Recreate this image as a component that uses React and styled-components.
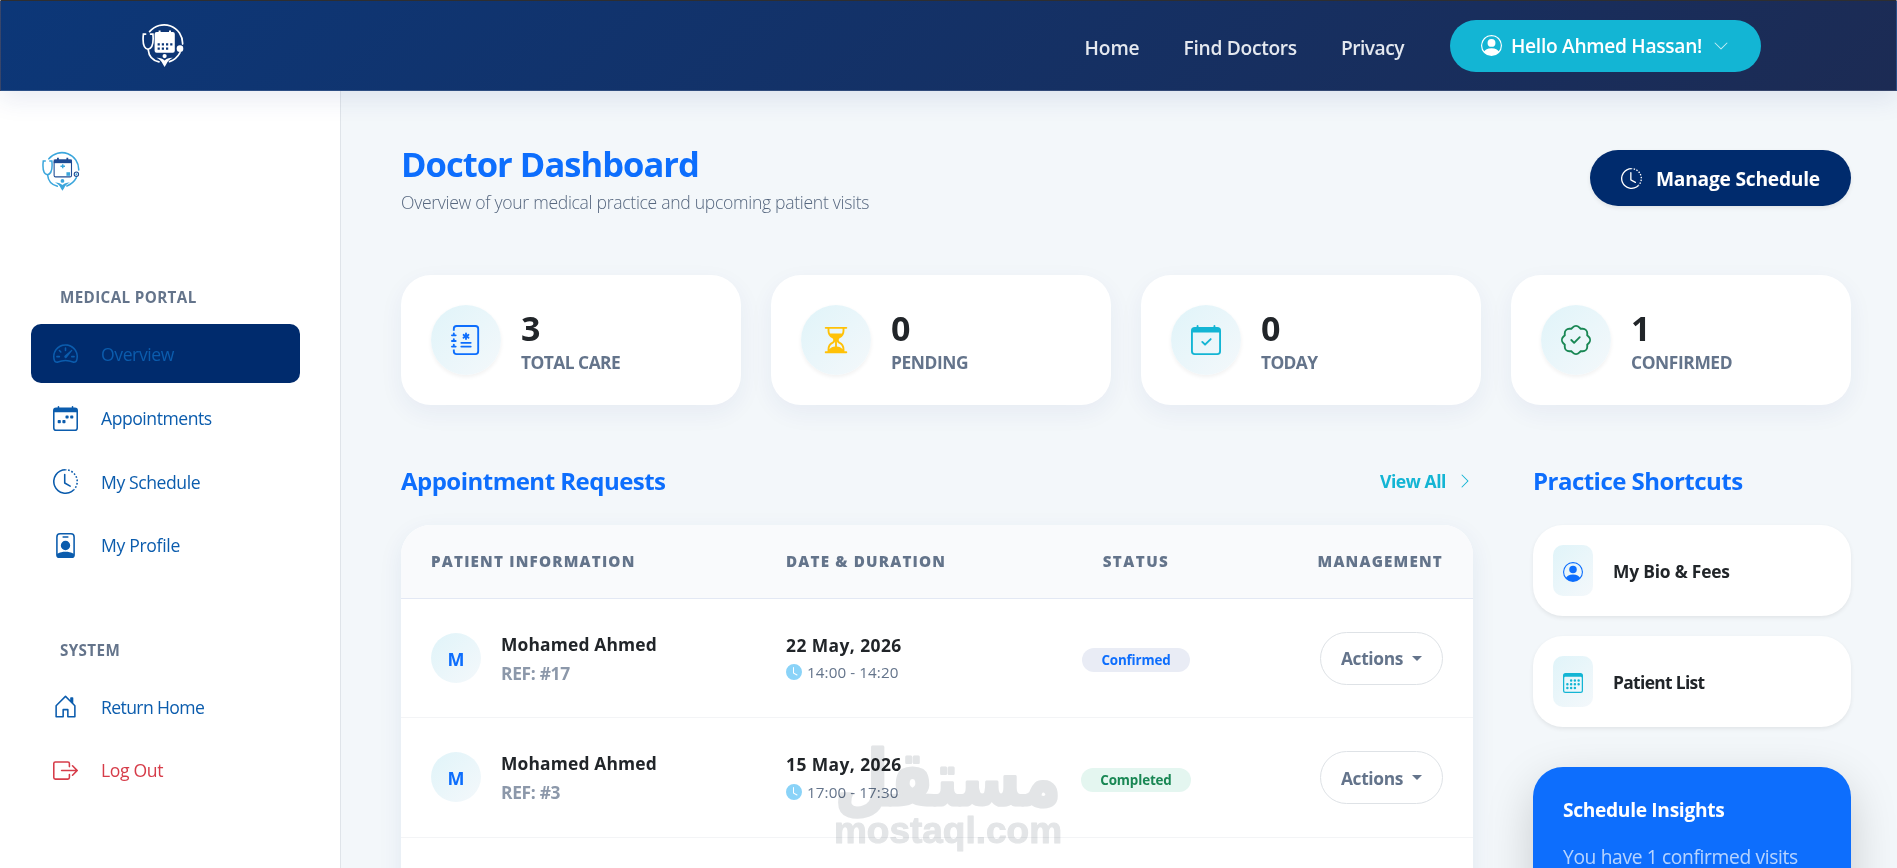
import React from 'react';
import styled, { createGlobalStyle } from 'styled-components';
import {
  BsBoxArrowRight,
  BsCalendar3,
  BsCalendarCheck,
  BsCalendarWeek,
  BsChevronDown,
  BsChevronRight,
  BsClockFill,
  BsClockHistory,
  BsHourglassSplit,
  BsHouseDoor,
  BsJournalMedical,
  BsPatchCheck,
  BsPersonBadge,
  BsPersonCircle,
  BsSpeedometer2,
} from 'react-icons/bs';

const GlobalStyle = createGlobalStyle`
  * {
    box-sizing: border-box;
  }

  body {
    margin: 0;
    background: #f3f7fa;
    font-family: 'Open Sans', 'Noto Sans', sans-serif;
    color: #212529;
  }

  svg {
    display: block;
    flex: none;
  }
`;

const Page = styled.div`
  position: relative;
  display: flex;
  flex-direction: column;
  height: 868px;
  overflow: hidden;
`;

const Navbar = styled.header`
  position: relative;
  z-index: 2;
  display: flex;
  align-items: center;
  justify-content: space-between;
  height: 91px;
  flex: none;
  padding: 0 135px 0 141px;
  background: linear-gradient(135deg, #0c3778 0%, #1c2b54 100%);
  border: 1px solid rgba(255, 255, 255, 0.12);
  border-top: 1px solid #2e2e30;
  box-shadow: 0 8px 24px rgba(30, 58, 138, 0.1);
`;

const NavLinks = styled.nav`
  display: flex;
  align-items: center;
`;

const NavLink = styled.a`
  margin-right: 44px;
  padding-top: 4px;
  font-size: 19.2px;
  font-weight: 600;
  line-height: 28px;
  letter-spacing: ${(props) => props.$track || 0}px;
  white-space: nowrap;
  color: #e4e8ef;
`;

const UserButton = styled.a`
  display: flex;
  align-items: center;
  width: 311px;
  height: 52px;
  margin-left: 2px;
  padding-left: 31px;
  border-radius: 26px;
  background: #13b5d4;
  color: #fff;
  font-size: 19.2px;
  font-weight: 600;
  white-space: nowrap;

  span {
    margin: 0 11px 0 9px;
    letter-spacing: -0.31px;
  }

  svg:last-child {
    opacity: 0.75;
  }
`;

const Body = styled.div`
  display: flex;
  flex: 1;
  min-height: 0;
`;

const Sidebar = styled.aside`
  width: 341px;
  flex: none;
  padding: 60px 40px 0 31px;
  background: #fff;
  border-right: 1px solid #dfe4e9;
`;

const SidebarLogo = styled.div`
  padding-left: 11px;
  height: 132px;
`;

const SideHeading = styled.h6`
  margin: 0;
  padding: ${(props) => (props.$spaced ? '61px' : '4px')} 0 16px 29px;
  font-size: 15.2px;
  font-weight: 700;
  line-height: 21px;
  letter-spacing: 0.38px;
  color: #64748b;
`;

const SideLink = styled.a`
  display: flex;
  align-items: center;
  height: 59px;
  margin-bottom: ${(props) => (props.$active ? 5.6 : 4.6)}px;
  padding-left: 22px;
  border-radius: 10px;
  background: ${(props) => (props.$active ? '#002b6d' : 'transparent')};
  color: ${(props) => (props.$danger ? '#d63c49' : '#0b5cad')};
  font-size: 17.6px;
  font-weight: 500;

  span {
    margin-left: 23px;
    letter-spacing: ${(props) => props.$track || 0}px;
  }
`;

const Main = styled.main`
  flex: 1;
  padding: 53px 46px 0 60px;
`;

const PageHead = styled.div`
  display: flex;
  justify-content: space-between;
  height: 131px;
`;

const Title = styled.h1`
  margin: 0;
  padding-top: 1px;
  font-size: 34.5px;
  font-weight: 700;
  line-height: 38px;
  letter-spacing: -0.97px;
  color: #0d6efd;
`;

const Subtitle = styled.p`
  margin: 7px 0 0;
  font-size: 17.6px;
  font-weight: 300;
  line-height: 24px;
  letter-spacing: -0.31px;
  color: #56677f;
`;

const PrimaryButton = styled.a`
  display: flex;
  align-items: center;
  width: 261px;
  height: 56px;
  margin-top: 6px;
  padding-left: 31px;
  border-radius: 28px;
  background: #002b6d;
  box-shadow: 0 2px 4px rgba(0, 0, 0, 0.08);
  color: #fff;
  font-size: 19.2px;
  font-weight: 700;

  span {
    margin-left: 14px;
    letter-spacing: -0.23px;
    white-space: nowrap;
  }
`;

const StatGrid = styled.div`
  display: grid;
  grid-template-columns: repeat(4, 1fr);
  gap: 30px;
`;

const StatCard = styled.div`
  display: flex;
  align-items: center;
  height: 130px;
  padding-left: 30px;
  border-radius: 30px;
  background: #fff;
  box-shadow: 0 8px 24px rgba(30, 58, 138, 0.06);
`;

const StatIcon = styled.div`
  display: flex;
  align-items: center;
  justify-content: center;
  width: 70px;
  height: 70px;
  border-radius: 50%;
  background: linear-gradient(135deg, #e0f4f9, #f4f8fb);
  box-shadow: 0 2px 4px rgba(0, 0, 0, 0.06);
  color: ${(props) => props.$color};
`;

const StatText = styled.div`
  margin-left: 20px;
`;

const StatValue = styled.div`
  padding-top: 5px;
  font-size: 34px;
  font-weight: 700;
  line-height: 40px;
  letter-spacing: -1px;
`;

const StatLabel = styled.div`
  font-size: 17.4px;
  font-weight: 700;
  line-height: 29px;
  letter-spacing: ${(props) => props.$track || 0}px;
  color: #64748b;
`;

const Columns = styled.div`
  display: grid;
  grid-template-columns: 1072px 318px;
  column-gap: 60px;
  padding-top: 60px;
`;

const SectionHead = styled.div`
  display: flex;
  align-items: center;
  justify-content: space-between;
  height: 32px;
  margin-bottom: 28px;
`;

const SectionTitle = styled.h4`
  margin: 0;
  font-size: 24px;
  font-weight: 700;
  line-height: 32px;
  letter-spacing: -0.52px;
  color: #0d6efd;
`;

const ViewAll = styled.a`
  display: flex;
  align-items: center;
  color: #13b5d4;
  font-size: 17.6px;
  font-weight: 700;

  span {
    margin-right: 11px;
    letter-spacing: -0.46px;
  }
`;

const TableCard = styled.div`
  height: 400px;
  border-radius: 30px;
  background: #fff;
  box-shadow: 0 8px 24px rgba(30, 58, 138, 0.08);
  overflow: hidden;
`;

const TableRow = styled.div`
  display: grid;
  grid-template-columns: 355px 250px 200px 1fr;
  align-items: center;
  height: 119.4px;
  padding: 0 30px;
  border-bottom: 1px solid #f3f4f6;
`;

const TableHead = styled(TableRow)`
  height: 74px;
  padding-bottom: 2px;
  background: #f9fafc;
  border-color: #e3e8f4;
  color: #64748b;
  font-size: 15.2px;
  font-weight: 800;
`;

const HeadCell = styled.div`
  justify-self: ${(props) => props.$align || 'start'};
  letter-spacing: ${(props) => props.$track || 1.18}px;
  white-space: nowrap;
`;

const Patient = styled.div`
  display: flex;
  align-items: center;
  padding-bottom: 1px;
`;

const Avatar = styled.div`
  display: flex;
  align-items: center;
  justify-content: center;
  width: 50px;
  height: 50px;
  margin-right: 20px;
  padding-top: 2px;
  border-radius: 50%;
  background: linear-gradient(135deg, #e0f4f9, #f4f8fb);
  color: #0d6efd;
  font-size: 18px;
  font-weight: 700;
`;

const PatientText = styled.div`
  padding-top: 2px;
`;

const Name = styled.div`
  font-size: 17.4px;
  font-weight: 700;
  line-height: 29px;
  letter-spacing: 0.17px;
`;

const Ref = styled(Name)`
  color: #8c98aa;
  letter-spacing: -0.32px;
`;

const Day = styled(Name)`
  letter-spacing: 0.44px;
`;

const Slot = styled.div`
  padding-bottom: 1px;
`;

const Time = styled.div`
  display: flex;
  align-items: center;
  height: 25px;
  color: #64748b;
  font-size: 15.2px;

  svg {
    color: #8ad3f8;
  }

  span {
    margin-left: 5px;
    letter-spacing: 0.1px;
  }
`;

const badgeTones = {
  Confirmed: { bg: '#e9ecf5', fg: '#0d6efd', width: '108px' },
  Completed: { bg: '#e4f6f0', fg: '#198754', width: '110px' },
};

const Badge = styled.div`
  justify-self: center;
  width: ${(props) => props.$tone.width};
  margin-top: 4px;
  border-radius: 12px;
  background: ${(props) => props.$tone.bg};
  color: ${(props) => props.$tone.fg};
  font-size: 13.4px;
  font-weight: 700;
  line-height: 24px;
  letter-spacing: -0.15px;
  text-align: center;
`;

const ActionButton = styled.button`
  display: flex;
  align-items: center;
  justify-self: end;
  width: 123px;
  height: 53px;
  padding: 0 0 0 20px;
  border: 1px solid #dee2e6;
  border-radius: 27px;
  background: #fff;
  color: #64748b;
  font: 700 17.4px 'Open Sans', sans-serif;

  span {
    letter-spacing: -0.38px;
  }

  &::after {
    content: '';
    margin-left: 9px;
    border-top: 5px solid;
    border-right: 5px solid transparent;
    border-left: 5px solid transparent;
  }
`;

const Shortcut = styled.a`
  display: flex;
  align-items: center;
  height: 91px;
  margin-bottom: 20px;
  padding-left: 20px;
  border-radius: 30px;
  background: #fff;
  box-shadow: 0 2px 4px rgba(0, 0, 0, 0.075);
  font-size: 17.4px;
  font-weight: 700;

  span {
    margin-left: 20px;
    letter-spacing: ${(props) => props.$track || 0}px;
  }
`;

const ShortcutIcon = styled.div`
  display: flex;
  align-items: center;
  justify-content: center;
  width: 40px;
  height: 51px;
  padding-top: 3px;
  border-radius: 10px;
  background: linear-gradient(135deg, #e0f4f9, #f4f8fb);
  color: ${(props) => props.$color};
`;

const Insights = styled.section`
  height: 240px;
  margin-top: 40px;
  padding: 30px;
  border-radius: 30px;
  background: #0d6efd;
  box-shadow: 0 16px 48px rgba(0, 0, 0, 0.175);
  color: #fff;
`;

const InsightsTitle = styled.h5`
  margin: 0 0 19px;
  font-size: 19.2px;
  font-weight: 700;
  line-height: 26px;
  letter-spacing: -0.33px;
`;

const InsightsText = styled.p`
  margin: 0;
  font-size: 19.2px;
  line-height: 30px;
  letter-spacing: -0.34px;
  white-space: nowrap;
  color: rgba(255, 255, 255, 0.7);
`;

const Watermark = styled.svg`
  position: absolute;
  left: 825px;
  top: 736px;
  z-index: 3;
  mix-blend-mode: multiply;
`;

const Logo = ({ size, line, sheet, accent }) => (
  <svg width={size} height={size * 1.05} viewBox='0 0 42 44' fill='none'>
    <g stroke={line} strokeWidth='1.7' strokeLinecap='round'>
      <path d='M7.6 8.6A18.6 18.6 0 0 1 40.6 21' />
      <path d='M38 29.5A19 19 0 0 1 27.5 38.6' />
      <path d='M6.2 26.5C6.8 33 11 37.5 17 38.8' />
      <path d='M3.6 11H1.4C.6 18 1.2 25.4 6 26.2C10.8 25.4 11.6 18 10.9 11H8.6' />
    </g>
    <circle
      cx='38'
      cy='25.6'
      r={accent ? 2.4 : 3.3}
      fill={accent ? '#fff' : line}
      stroke={accent ? sheet : line}
      strokeWidth={accent ? 1.2 : 0}
    />
    {accent && <circle cx='38' cy='25.6' r='1' fill={line} />}
    <path d='M17.6 7.4v3M28 7.4v3' stroke={sheet} strokeWidth='2' />
    {accent ? (
      <>
        <rect
          x='13.4'
          y='10'
          width='19.2'
          height='18.6'
          rx='1.6'
          fill='#fff'
          stroke={sheet}
          strokeWidth='1.2'
        />
        <path d='M13 9.4h20v4H13z' fill={sheet} />
        <path d='M22.9 14.6v4.4M20.4 16.8h5' stroke={line} strokeWidth='1.6' />
        <path d='M27 23.4h4v4h-4z' fill={line} />
      </>
    ) : (
      <>
        <rect x='12.6' y='9' width='20.2' height='20.6' rx='2' fill={sheet} />
        <path
          d='M15.6 21.4h14.8M15.6 25.6h10.6'
          stroke='#0c3778'
          strokeWidth='2.2'
          strokeDasharray='2.2 2'
        />
      </>
    )}
    <circle cx='22.6' cy='33' r='2.1' fill={line} />
    <path
      d='M14.4 34.8C18 34.6 20.4 35.6 22.6 37.4C24.8 35.6 27.2 34.6 30.8 34.8C28 36 25.6 38 24.4 41L22.6 44L20.8 41C19.6 38 17.2 36 14.4 34.8z'
      fill={line}
    />
  </svg>
);

const portalLinks = [
  { label: 'Overview', icon: BsSpeedometer2, active: true, track: -0.41 },
  { label: 'Appointments', icon: BsCalendarWeek, track: -0.47 },
  { label: 'My Schedule', icon: BsClockHistory, track: -0.42 },
  { label: 'My Profile', icon: BsPersonBadge, track: -0.33 },
];

const systemLinks = [
  { label: 'Return Home', icon: BsHouseDoor, track: -0.62 },
  { label: 'Log Out', icon: BsBoxArrowRight, danger: true, track: -0.36 },
];

const stats = [
  { value: 3, label: 'TOTAL CARE', icon: BsJournalMedical, color: '#0d6efd', track: -0.54 },
  { value: 0, label: 'PENDING', icon: BsHourglassSplit, color: '#ffc107', track: -0.42 },
  { value: 0, label: 'TODAY', icon: BsCalendarCheck, color: '#13b5d4', track: -0.65 },
  { value: 1, label: 'CONFIRMED', icon: BsPatchCheck, color: '#198754', track: -0.41 },
];

const appointments = [
  { name: 'Mohamed Ahmed', id: 17, date: '22 May, 2026', time: '14:00 - 14:20', status: 'Confirmed' },
  { name: 'Mohamed Ahmed', id: 3, date: '15 May, 2026', time: '17:00 - 17:30', status: 'Completed' },
];

const renderSideLink = ({ label, icon: Icon, active, danger, track }) => (
  <SideLink key={label} $active={active} $danger={danger} $track={track}>
    <Icon size={25} />
    <span>{label}</span>
  </SideLink>
);

const App = () => {
  return (
    <>
      <GlobalStyle />
      <Page>
        <Navbar>
          <Logo size={42} line='#fff' sheet='#fff' />
          <NavLinks>
            <NavLink $track={-0.1}>Home</NavLink>
            <NavLink $track={-0.3}>Find Doctors</NavLink>
            <NavLink $track={-0.5}>Privacy</NavLink>
            <UserButton>
              <BsPersonCircle size={21} />
              <span>Hello Ahmed Hassan!</span>
              <BsChevronDown size={16} />
            </UserButton>
          </NavLinks>
        </Navbar>

        <Body>
          <Sidebar>
            <SidebarLogo>
              <Logo size={38} line='#3ba6dc' sheet='#1f4b93' accent />
            </SidebarLogo>
            <SideHeading>MEDICAL PORTAL</SideHeading>
            {portalLinks.map(renderSideLink)}
            <SideHeading $spaced>SYSTEM</SideHeading>
            {systemLinks.map(renderSideLink)}
          </Sidebar>

          <Main>
            <PageHead>
              <div>
                <Title>Doctor Dashboard</Title>
                <Subtitle>
                  Overview of your medical practice and upcoming patient visits
                </Subtitle>
              </div>
              <PrimaryButton>
                <BsClockHistory size={21} />
                <span>Manage Schedule</span>
              </PrimaryButton>
            </PageHead>

            <StatGrid>
              {stats.map(({ value, label, icon: Icon, color, track }) => (
                <StatCard key={label}>
                  <StatIcon $color={color}>
                    <Icon size={30} />
                  </StatIcon>
                  <StatText>
                    <StatValue>{value}</StatValue>
                    <StatLabel $track={track}>{label}</StatLabel>
                  </StatText>
                </StatCard>
              ))}
            </StatGrid>

            <Columns>
              <section>
                <SectionHead>
                  <SectionTitle>Appointment Requests</SectionTitle>
                  <ViewAll>
                    <span>View All</span>
                    <BsChevronRight size={16} />
                  </ViewAll>
                </SectionHead>
                <TableCard>
                  <TableHead>
                    <HeadCell>PATIENT INFORMATION</HeadCell>
                    <HeadCell>DATE &amp; DURATION</HeadCell>
                    <HeadCell $align='center' $track={1.45}>STATUS</HeadCell>
                    <HeadCell $align='end'>MANAGEMENT</HeadCell>
                  </TableHead>
                  {appointments.map((item) => (
                    <TableRow key={item.id}>
                      <Patient>
                        <Avatar>{item.name[0]}</Avatar>
                        <PatientText>
                          <Name>{item.name}</Name>
                          <Ref>REF: #{item.id}</Ref>
                        </PatientText>
                      </Patient>
                      <Slot>
                        <Day>{item.date}</Day>
                        <Time>
                          <BsClockFill size={16} />
                          <span>{item.time}</span>
                        </Time>
                      </Slot>
                      <Badge $tone={badgeTones[item.status]}>{item.status}</Badge>
                      <ActionButton>
                        <span>Actions</span>
                      </ActionButton>
                    </TableRow>
                  ))}
                </TableCard>
              </section>

              <section>
                <SectionHead>
                  <SectionTitle>Practice Shortcuts</SectionTitle>
                </SectionHead>
                <Shortcut $track={-0.2}>
                  <ShortcutIcon $color='#0d6efd'>
                    <BsPersonCircle size={20} />
                  </ShortcutIcon>
                  <span>My Bio &amp; Fees</span>
                </Shortcut>
                <Shortcut $track={-0.66}>
                  <ShortcutIcon $color='#13b5d4'>
                    <BsCalendar3 size={20} />
                  </ShortcutIcon>
                  <span>Patient List</span>
                </Shortcut>
                <Insights>
                  <InsightsTitle>Schedule Insights</InsightsTitle>
                  <InsightsText>You have 1 confirmed visits</InsightsText>
                </Insights>
              </section>
            </Columns>
          </Main>
        </Body>

        <Watermark
          width='250'
          height='130'
          fill='#e3e5e7'
          stroke='#e3e5e7'
          strokeLinejoin='round'
          fontWeight='700'
        >
          <text
            x='10'
            y='69'
            fontFamily='DejaVu Sans, sans-serif'
            fontSize='76'
            strokeWidth='3'
            textLength='226'
            lengthAdjust='spacingAndGlyphs'
          >
            مستقل
          </text>
          <text
            x='9'
            y='107'
            fontFamily='Liberation Sans, sans-serif'
            fontSize='37'
            strokeWidth='1'
            textLength='228'
            lengthAdjust='spacingAndGlyphs'
          >
            mostaql.com
          </text>
        </Watermark>
      </Page>
    </>
  );
};

export default App;
